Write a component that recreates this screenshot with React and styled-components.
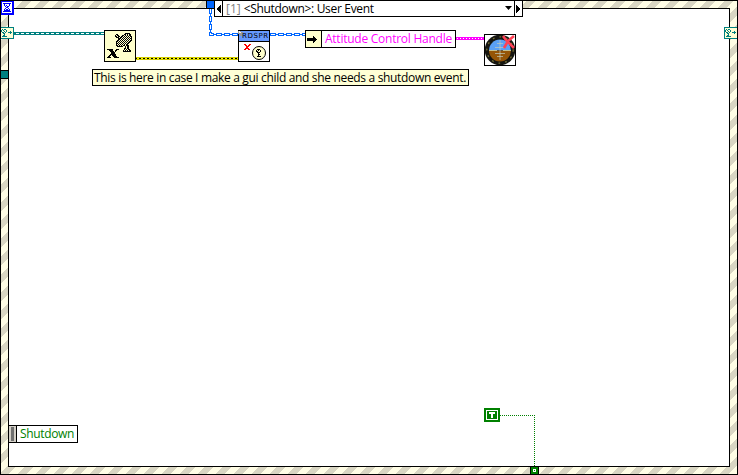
import React from "react";
import styled, { createGlobalStyle } from "styled-components";

const GlobalStyle = createGlobalStyle`
  body { margin: 0; background: #fff; }
  * { box-sizing: border-box; }
`;

const Structure = styled.main`
  position: relative;
  width: 738px;
  height: 475px;
  padding: 7px;
  border: 1px solid #000;
  overflow: hidden;
  font: 12px/16px "Open Sans", "Noto Sans", sans-serif;
  background: repeating-linear-gradient(
    135deg,
    #fffde5 0 2.5px,
    #d9d6c3 2.5px 8.5px,
    #fffde5 8.5px 12.728px
  );
`;

const Diagram = styled.div`
  height: 100%;
  border: 1px solid #000;
  background: #fff;
`;

const Wires = styled.svg`
  position: absolute;
  left: -1px;
  top: -1px;
  width: 738px;
  height: 475px;
  shape-rendering: crispEdges;
`;

/* Diagram nodes sit on a free canvas; coordinates are relative to the outer edge. */
const Node = styled.div`
  position: absolute;
  left: ${(p) => p.$x - 1}px;
  top: ${(p) => p.$y - 1}px;
  width: ${(p) => p.$w}px;
  height: ${(p) => p.$h}px;
  display: flex;
`;

const Selector = styled(Node)`
  border: 1px solid #000;
  background: #fff;
`;

const ArrowCell = styled.div`
  width: 8px;
  flex: none;
  border: 0 solid #000;
  border-right-width: ${(p) => (p.$end ? 0 : 1)}px;
  border-left-width: ${(p) => (p.$end ? 1 : 0)}px;
`;

const CaseName = styled.div`
  flex: 1;
  display: flex;
  gap: 3px;
  padding-left: 3px;
  white-space: nowrap;
`;

const Text = styled.span`
  color: ${(p) => p.$color || "#000"};
  letter-spacing: ${(p) => p.$spacing || 0}px;
  white-space: nowrap;
`;

const DropArrow = styled.svg`
  width: 9px;
  height: 15px;
  margin-left: auto;
  margin-right: 1px;
`;

const Comment = styled(Node)`
  border: 1px solid #000;
  background: #ffffd5;
  padding-left: 1px;
  line-height: 16px;
`;

const LabelNode = styled(Node)`
  border: 1px solid #000;
  background: #fff;
`;

const NodeGrip = styled.div`
  width: ${(p) => p.$w}px;
  flex: none;
  border-right: 1px solid #000;
  background: ${(p) => p.$bg};
  margin-right: 3px;
`;

const Glyph = styled.svg`
  display: block;
  width: ${(p) => p.$w}px;
  height: ${(p) => p.$h}px;
  shape-rendering: crispEdges;
`;

const IconTitle = styled.span`
  position: absolute;
  left: 4px;
  top: 1px;
  width: 27px;
  height: 10px;
  overflow: hidden;
  font: 7px/10px "DejaVu Sans", sans-serif;
  letter-spacing: 0.6px;
  color: #000;
`;

function Pixels({ rows, x = 0, y = 0, color }) {
  const d = rows
    .flatMap((row, j) =>
      [...row].map((c, i) => (c === "#" ? `M${x + i} ${y + j}h1v1h-1z` : ""))
    )
    .join("");
  return <path d={d} fill={color} />;
}

const REG_GLYPH = [
  ".#.##..",
  "#.#..#.",
  "#..#.#.",
  ".##.#..",
  "..##...",
  "...#...",
  "..##...",
  ".#####.",
];

const ANTENNA = [
  "..........#####...",
  ".##......##.#.##..",
  "#.##...##.#.#.##..",
  "##.##.##.#.#.#.##.",
  ".###.##.#.#.#.#.#.",
  "...###.#.#.#.#.##.",
  "...##.#.#.#.#.#.#.",
  "..##.#.#.#.#.#.##.",
  ".##.#.#.#.#.#.##..",
  ".#.#.#.#.#.#.##...",
  ".##.#.#.#.#.##....",
  ".#.#.#.#.#.##.....",
  ".##.#.#.##.###....",
  "..######..#.##....",
  "..........#.##....",
  ".........##.##....",
  ".........#.#.##...",
  "........#.#.#.##..",
  "........########..",
];

const BOLD_X = [
  "######...###.",
  "..####..##...",
  "...####.#....",
  "....####.....",
  "....####.....",
  "...######....",
  "..##.####....",
  ".##...####...",
  "####...#####.",
];

function EventTerminal({ x }) {
  return (
    <Node $x={x} $y={27} $w={14} $h={12}>
      <Glyph $w={14} $h={12} viewBox="0 0 14 12">
        <rect width="14" height="12" fill="#008080" />
        <rect x="1" y="1" width="12" height="10" fill="#ffffd5" />
        <Pixels rows={REG_GLYPH} x={1} y={2} color="#008080" />
        <path d="M8 5h4v1h-4zM10 4h1v3h-1z" fill="#008080" />
      </Glyph>
    </Node>
  );
}

function DiagramWires() {
  return (
    <Wires viewBox="0 0 738 475" fill="none">
      <path d="M14 33.5H104" stroke="#008080" strokeWidth="3" />
      <path d="M16 33.5H104" stroke="#fff" strokeDasharray="3 2" />
      <path d="M136 58.5H238" stroke="#000" strokeWidth="1" />
      <path d="M136 57.5H238M136 59.5H238" stroke="#d0ca00" />
      <path d="M137 58.5H238" stroke="#ffff00" strokeDasharray="2 2" />
      <path d="M210.5 8V34.5H238M270 34.5H305" stroke="#0066ff" strokeWidth="3" strokeDasharray="6 2" />
      <path d="M210.5 8V34.5H238M270 34.5H305" stroke="#0066ff" />
      <path d="M210.5 9V34.5H238M271 34.5H305" stroke="#fff" strokeDasharray="4 4" />
      <path d="M456 38.5H484" stroke="#ff00ff" strokeWidth="3" />
      <path d="M457 38.5H484" stroke="#fff" strokeDasharray="1 2" />
      <path d="M500 415.5H535" stroke="#008000" strokeDasharray="1 1" />
      <path d="M534.5 415V466" stroke="#008000" strokeDasharray="1 1" />
      <rect x="206" y="1" width="9" height="8" fill="#000" />
      <rect x="207" y="1" width="7" height="7" fill="#0066ff" />
      <path d="M0 70h9v9H0z" fill="#000" />
      <path d="M1 71h7v7H1z" fill="#008080" />
      <path d="M530 466h9v9h-9z" fill="#000" />
      <path d="M531 467h7v7h-7z" fill="#008000" />
      <path d="M533.5 469.5h2v2h-2z" stroke="#fff" />
    </Wires>
  );
}

function Hourglass() {
  return (
    <Node $x={0} $y={0} $w={14} $h={15}>
      <Glyph $w={14} $h={15} viewBox="0 0 14 15">
        <rect width="14" height="15" fill="#0000ff" />
        <rect x="2" y="2" width="10" height="11" fill="#fff" />
        <Pixels
          rows={["########", ".#....#.", ".#.#..#.", "..#.##..", "...##...", "..#..#..", ".#.##.#.", ".######.", "########"]}
          x={3}
          y={3}
          color="#0000ff"
        />
      </Glyph>
    </Node>
  );
}

function AntennaNode() {
  return (
    <Node $x={104} $y={30} $w={32} $h={32}>
      <Glyph $w={32} $h={32} viewBox="0 0 32 32">
        <rect x=".5" y=".5" width="31" height="31" fill="#ffffcc" stroke="#000" />
        <Pixels rows={ANTENNA} x={11} y={3} color="#000" />
        <Pixels rows={BOLD_X} x={3} y={19} color="#000" />
      </Glyph>
    </Node>
  );
}

function RegistrationNode() {
  return (
    <Node $x={238} $y={30} $w={32} $h={32}>
      <Glyph $w={32} $h={32} viewBox="0 0 32 32">
        <rect x=".5" y=".5" width="31" height="31" fill="#fff" stroke="#000" />
        <rect x="1" y="1" width="30" height="10" fill="#6699ff" />
        <path d="M1 11.5h30" stroke="#000" />
        <path d="M0 1h3v1h2v2h-1v2h-2v-2H0z" fill="#999" />
        <path d="M1 1h1v1h1v1h-2z" fill="#eee" />
        <Pixels
          rows={["##...##", ".##.##.", "..###..", "..##...", ".####..", "##..##."]}
          x={6}
          y={14}
          color="#ff0000"
        />
        <circle cx="21" cy="23" r="6.5" fill="#ffffcc" stroke="#000" shapeRendering="auto" />
        <Pixels
          rows={["..###.", ".#.#.#", ".##..#", "..###.", "...#..", "...##.", "...#..", "..####"]}
          x={17}
          y={19}
          color="#000"
        />
      </Glyph>
      <IconTitle>RDSPR</IconTitle>
    </Node>
  );
}

function AttitudeNode() {
  return (
    <Node $x={484} $y={34} $w={32} $h={32}>
      <Glyph $w={32} $h={32} viewBox="0 0 32 32">
        <rect x=".5" y=".5" width="31" height="31" fill="#fff" stroke="#000" />
        <g shapeRendering="auto">
          <circle cx="16" cy="16" r="15.3" fill="#151510" />
          <circle cx="16" cy="16" r="13.2" fill="none" stroke="#777336" strokeWidth="1.3" strokeDasharray="1.8 5" />
          <path d="M5 16.500a11 11 0 0 1 22 0z" fill="#5ba0f5" />
          <path d="M5 16.500a11 11 0 0 0 22 0z" fill="#955507" />
          <path d="M5 16.500h8M19 16.500h8" stroke="#ddd9a0" strokeWidth=".8" />
          <path d="M16 6v20M13 9.500h6M11 13.500h10M11 19.500h10M13 22.500h6" stroke="#c1cbbb" strokeWidth=".7" />
          <path d="M19 2l3 4 8 8M30 2l-6 5-4 7" fill="none" stroke="#ff4055" strokeWidth="2.6" />
        </g>
      </Glyph>
    </Node>
  );
}

export default function App() {
  return (
    <>
      <GlobalStyle />
      <Structure>
        <Diagram />
        <DiagramWires />
        <Hourglass />
        <EventTerminal x={0} />
        <EventTerminal x={724} />
        <Selector $x={214} $y={0} $w={309} $h={17}>
          <ArrowCell>
            <Glyph $w={7} $h={15} viewBox="0 0 7 15">
              <path d="M6 4v8L1 8z" fill="#000" />
            </Glyph>
          </ArrowCell>
          <CaseName>
            <Text $color="#808080">[1]</Text>
            <Text $spacing={-0.32}>&lt;Shutdown&gt;: User Event</Text>
            <DropArrow viewBox="0 0 9 15">
              <path d="M1 5h7L4.500 9z" fill="#000" />
            </DropArrow>
          </CaseName>
          <ArrowCell $end>
            <Glyph $w={7} $h={15} viewBox="0 0 7 15">
              <path d="M1 4v8l5-4z" fill="#000" />
            </Glyph>
          </ArrowCell>
        </Selector>
        <AntennaNode />
        <RegistrationNode />
        <LabelNode $x={305} $y={30} $w={151} $h={18}>
          <NodeGrip $w={16} $bg="#ffffcc">
            <Glyph $w={15} $h={16} viewBox="0 0 15 16">
              <path d="M1 7h6V5h1v1h1v1h1v1h1v1h-1v1h-1v1h-1v1H7v-2H1z" fill="#000" />
            </Glyph>
          </NodeGrip>
          <Text $color="#ff00ff" $spacing={-0.25}>Attitude Control Handle</Text>
        </LabelNode>
        <AttitudeNode />
        <Comment $x={92} $y={69} $w={377} $h={17}>
          <Text $spacing={-0.33}>This is here in case I make a gui child and she needs a shutdown event.</Text>
        </Comment>
        <LabelNode $x={8} $y={425} $w={70} $h={18}>
          <NodeGrip $w={8} $bg="#d4d0c8">
            <Glyph $w={7} $h={16} viewBox="0 0 7 16">
              <path d="M2 1h3v14H2z" fill="#707070" />
            </Glyph>
          </NodeGrip>
          <Text $color="#008000" $spacing={-0.35}>Shutdown</Text>
        </LabelNode>
        <Node $x={484} $y={408} $w={16} $h={14}>
          <Glyph $w={16} $h={14} viewBox="0 0 16 14">
            <rect width="16" height="14" fill="#008000" />
            <path d="M2.500 2.500h11v9h-11z" fill="none" stroke="#fff" />
            <path d="M5 4h6v2H9v4H7V6H5z" fill="#fff" />
          </Glyph>
        </Node>
      </Structure>
    </>
  );
}
